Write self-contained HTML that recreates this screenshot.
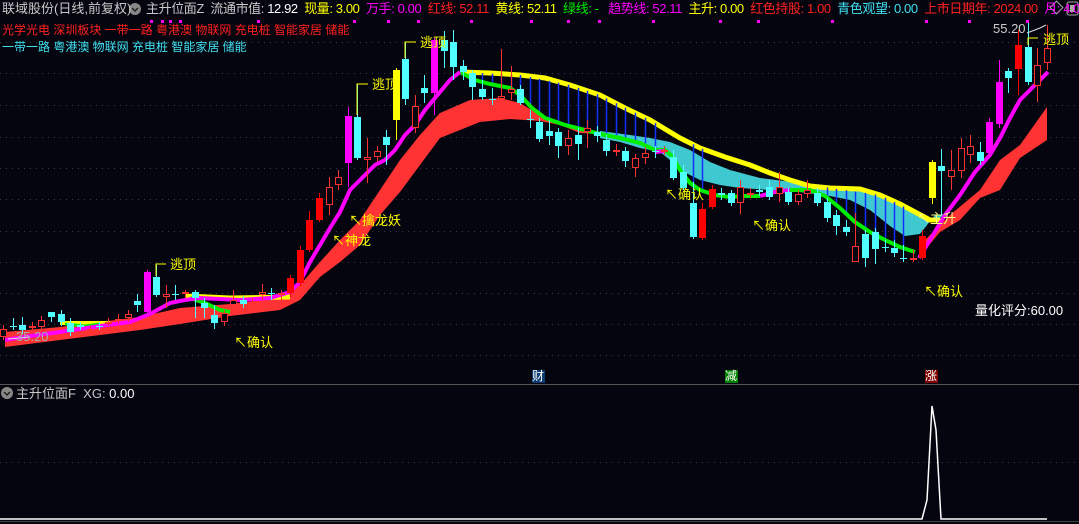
<!DOCTYPE html>
<html><head><meta charset="utf-8">
<style>
html,body{margin:0;padding:0;background:#05050f;}
body{width:1079px;height:524px;overflow:hidden;position:relative;font-family:"Liberation Sans","Noto Sans CJK SC",sans-serif;}
svg{position:absolute;left:0;top:0;}
.t{position:absolute;white-space:nowrap;font-size:12px;line-height:15px;}
.b{font-size:13px;}
</style></head><body>
<svg id="s" width="1079" height="524" xmlns="http://www.w3.org/2000/svg">
<g id="grid" stroke="#3a3a44" stroke-width="1" stroke-dasharray="1,5"></g>
<polygon fill="#ff3333" points="5,332 60,327 100,322 140,317 180,308 230,304 280,298 300,285 320,262 340,240 360,220 380,190 400,160 420,135 440,113 470,100 500,98 520,103 540,115 560,125 580,130 600,133 600,134 580,133 560,125 540,121 510,119 480,122 455,132 440,138 420,165 400,192 380,215 360,245 340,262 320,277 300,300 280,310 230,316 180,324 140,330 100,335 60,340 5,347"/>
<polygon fill="#ff3333" points="925,240 950,215 980,190 1000,160 1020,145 1047,107 1047,140 1020,158 1000,190 980,198 960,220 940,232 925,250"/>
<polygon fill="#40c8d0" points="600,131 630,135 650,138 670,142 690,150 710,162 730,170 760,178 800,183 840,187 880,195 910,210 935,222 945,214 935,215 920,234 905,236 890,226 870,210 850,200 830,196 800,192 770,190 740,188 720,185 700,180 680,170 670,160 660,152 640,148 620,142 600,138"/>
<polyline fill="none" stroke="#ffff00" stroke-width="5" points="460,72 490,73 520,75 545,78 570,85 600,95 625,108 650,120 680,138 700,148 725,157 750,165 770,173 790,180 810,186 830,188 860,189 880,195 900,204 915,212 930,220 940,220"/>
<polyline fill="none" stroke="#ffff00" stroke-width="5" points="185,296 230,298 290,297"/>
<polyline fill="none" stroke="#ffff00" stroke-width="4" points="60,323 110,323"/>
<g id="blue" stroke="#1030ff" stroke-width="1.5"></g>
<polyline fill="none" stroke="#00ee00" stroke-width="4" points="460,72 475,80 490,84 510,88 520,95 532,108 545,118 565,125 585,130 600,134 620,138 640,143 655,150 665,150 672,156 680,170 690,183 700,190 715,195 730,197 745,196 760,196"/>
<polyline fill="none" stroke="#00ee00" stroke-width="4" points="790,190 810,190 825,196 840,208 855,222 870,232 885,240 900,247 915,252"/>
<polyline fill="none" stroke="#00ee00" stroke-width="4" points="190,298 205,303 220,310 230,312"/>
<polyline fill="none" stroke="#00ee00" stroke-width="3" points="65,324 85,326 100,324"/>
<polyline fill="none" stroke="#ff00ff" stroke-width="4" points="655,152 665,151"/>
<polyline fill="none" stroke="#ff00ff" stroke-width="4" points="760,196 775,192 790,190"/>
<polyline fill="none" stroke="#ff00ff" stroke-width="4" points="5,340 30,336 60,332 100,326 130,322 150,314 170,303 185,300 200,298 240,300 270,298 290,292 300,282 310,262 320,245 330,228 340,212 350,190 360,180 375,165 385,160 395,150 405,135 415,125 425,110 440,92 450,80 460,72"/>
<polyline fill="none" stroke="#ff00ff" stroke-width="4" points="919,258 930,240 945,215 960,195 975,172 990,155 1000,138 1010,118 1020,100 1035,85 1048,72"/>
<g id="candles"></g>
<g stroke="#ffff00" stroke-width="1" fill="none">
<polyline points="405,58 405,42 416,42"/><polyline points="357,115 357,84 368,84"/>
<polyline points="156,276 156,264 166,264"/><polyline points="1028,45 1028,38 1038,38"/>
</g>
<polyline points="1027,33 1040,28 1046,25" stroke="#ddd" fill="none" stroke-width="1"/>
<polyline points="30,337 8,339" stroke="#ddd" fill="none" stroke-width="1"/>
<line x1="0" y1="384.5" x2="1079" y2="384.5" stroke="#555" stroke-width="1"/>
<line x1="0" y1="462.5" x2="1079" y2="462.5" stroke="#3a3a44" stroke-dasharray="1,5"/>
<line x1="0" y1="521.5" x2="1079" y2="521.5" stroke="#444"/>
<polyline points="0,519 922,519 927,500 932,406 936,430 941,519 1047,519" fill="none" stroke="#fff" stroke-width="1.5"/>
<rect x="532" y="370" width="13" height="13" fill="#0a3a70"/>
<rect x="725" y="370" width="13" height="13" fill="#008000"/>
<rect x="925" y="370" width="13" height="13" fill="#800000"/>
<circle cx="135" cy="9" r="6" fill="#888"/><polyline points="132,8 135,11 138,8" stroke="#222" fill="none" stroke-width="1.5"/>
<circle cx="7" cy="393" r="6" fill="#888"/><polyline points="4,392 7,395 10,392" stroke="#222" fill="none" stroke-width="1.5"/>
<rect x="1010" y="0" width="69" height="18" fill="#05050f"/>
<rect x="1052" y="3" width="9" height="9" transform="rotate(45 1056.5 7.5)" fill="none" stroke="#aaa"/>
<rect x="1067" y="2" width="11" height="13" rx="2" fill="none" stroke="#aaa"/>
<rect x="1070" y="5" width="5" height="7" fill="#aaa"/>
<g id="dots" fill="#ff00ff"></g>
</svg>
<div class="t b" style="left:2px;top:1px;color:#c8c8c8">联域股份(日线,前复权)</div>
<div class="t b" style="left:146px;top:1px;color:#c8c8c8;letter-spacing:-0.4px">主升位面Z&nbsp; 流通市值: <span style="color:#fff">12.92</span>&nbsp; <span style="color:#ffff00">现量: 3.00</span>&nbsp; <span style="color:#ff00ff">万手: 0.00</span>&nbsp; <span style="color:#ff2020">红线: 52.11</span>&nbsp; <span style="color:#ffff00">黄线: 52.11</span>&nbsp; <span style="color:#00ee00">绿线: -</span>&nbsp;&nbsp; <span style="color:#ff00ff">趋势线: 52.11</span>&nbsp; <span style="color:#ffff00">主升: 0.00</span>&nbsp; <span style="color:#ff2020">红色持股: 1.00</span>&nbsp; <span style="color:#40e0f0">青色观望: 0.00</span>&nbsp; <span style="color:#ff2020">上市日期年: 2024.00</span>&nbsp; <span style="color:#ff00ff">月: 4.0</span></div>
<div class="t" style="left:2px;top:23px;color:#ff2020">光学光电 深圳板块 一带一路 粤港澳 物联网 充电桩 智能家居 储能</div>
<div class="t" style="left:2px;top:40px;color:#40e0f0">一带一路 粤港澳 物联网 充电桩 智能家居 储能</div>
<div class="t b" style="left:420px;top:35px;color:#ffff00">逃顶</div>
<div class="t b" style="left:372px;top:77px;color:#ffff00">逃顶</div>
<div class="t b" style="left:170px;top:257px;color:#ffff00">逃顶</div>
<div class="t b" style="left:1043px;top:32px;color:#ffff00">逃顶</div>
<div class="t b" style="left:349px;top:213px;color:#ffff00">↖擒龙妖</div>
<div class="t b" style="left:332px;top:233px;color:#ffff00">↖神龙</div>
<div class="t b" style="left:234px;top:335px;color:#ffff00">↖确认</div>
<div class="t b" style="left:665px;top:187px;color:#ffff00">↖确认</div>
<div class="t b" style="left:752px;top:218px;color:#ffff00">↖确认</div>
<div class="t b" style="left:924px;top:284px;color:#ffff00">↖确认</div>
<div class="t b" style="left:917px;top:211px;color:#ffff80">↖主升</div>
<div class="t b" style="left:975px;top:303px;color:#fff">量化评分:60.00</div>
<div class="t b" style="left:993px;top:21px;color:#ccc">55.20</div>
<div class="t b" style="left:16px;top:329px;color:#aaa">35.20</div>
<div class="t" style="left:532px;top:369px;color:#fff">财</div>
<div class="t" style="left:725px;top:369px;color:#fff">减</div>
<div class="t" style="left:925px;top:369px;color:#fff">涨</div>
<div class="t b" style="left:16px;top:386px;color:#c8c8c8">主升位面F&nbsp; XG: <span style="color:#fff">0.00</span></div>
<script>
var NS="http://www.w3.org/2000/svg";
function el(p,t,a){var e=document.createElementNS(NS,t);for(var k in a)e.setAttribute(k,a[k]);document.getElementById(p).appendChild(e);}
[42,73,105,137,168,199,231,262,293,324,355].forEach(function(y){el('grid','line',{x1:0,x2:1079,y1:y+.5,y2:y+.5});});
[150,161,169,179,257,353,387,417,470,530,567,598,652,719,757,831,925,968,1026].forEach(function(x){el('dots','rect',{x:x,y:20,width:3,height:3});});
var C={r:'#ff3030',R:'#ff0000',c:'#50ffff',m:'#ff00ff',y:'#ffff00'};
var d=[[0,329,337,325,340,'r'],[10,326,327,318,330,'c'],[19,325,330,317,334,'c'],[29,326,328,322,331,'r'],[38,320,327,316,330,'r'],[48,312,317,312,322,'c'],[58,314,322,310,326,'c'],[67,323,332,318,336,'c'],[77,325,327,322,330,'c'],[87,329,330,326,333,'r'],[96,326,327,322,330,'c'],[105,322,323,318,326,'r'],[115,319,320,314,324,'r'],[125,314,318,310,322,'r'],[134,301,305,294,312,'c'],[144,272,312,270,314,'m'],[153,277,295,265,297,'c'],[163,294,297,285,308,'r'],[172,294,295,285,300,'c'],[182,292,294,290,298,'r'],[192,292,298,290,318,'c'],[201,303,308,298,318,'c'],[211,315,323,305,329,'c'],[221,313,322,310,326,'r'],[230,300,305,290,310,'r'],[240,300,304,296,308,'c'],[249,302,303,298,308,'r'],[259,292,295,284,300,'r'],[268,293,294,288,300,'c'],[278,293,294,290,300,'r'],[287,278,293,275,297,'R'],[297,250,283,246,286,'R'],[306,220,250,211,252,'R'],[316,198,220,193,222,'R'],[326,187,205,177,215,'r'],[335,177,185,170,190,'r'],[345,116,163,107,187,'m'],[354,117,158,84,160,'c'],[364,157,160,138,183,'r'],[374,151,157,146,162,'r'],[383,137,145,130,165,'c'],[393,70,120,68,140,'y'],[402,59,99,42,105,'c'],[412,106,128,95,133,'r'],[421,88,93,75,103,'c'],[431,40,93,38,115,'m'],[441,40,51,31,68,'c'],[450,42,67,30,80,'c'],[460,66,72,60,80,'c'],[469,73,87,70,100,'c'],[479,89,97,80,100,'c'],[489,99,100,88,105,'c'],[498,96,99,49,103,'r'],[508,89,93,66,100,'r'],[517,89,103,85,105,'c'],[527,119,120,110,128,'c'],[536,122,139,118,142,'c'],[546,131,136,120,145,'c'],[555,132,146,128,158,'c'],[565,138,146,130,155,'r'],[575,135,144,128,160,'c'],[584,128,132,120,148,'r'],[594,132,136,126,142,'c'],[603,140,151,135,156,'c'],[613,150,151,144,156,'r'],[622,151,161,147,167,'c'],[632,158,168,154,177,'r'],[642,153,158,147,164,'r'],[652,151,152,146,158,'c'],[661,150,151,146,155,'r'],[670,157,178,150,180,'c'],[680,172,188,165,190,'c'],[690,203,237,182,239,'c'],[699,209,238,203,240,'R'],[709,189,207,185,209,'R'],[718,193,195,188,200,'c'],[728,193,203,190,206,'c'],[737,187,203,180,214,'r'],[747,193,194,188,198,'r'],[756,190,192,185,196,'c'],[766,187,197,180,200,'c'],[776,187,194,172,202,'r'],[785,192,202,188,205,'c'],[795,194,202,190,205,'r'],[804,190,194,180,198,'r'],[814,193,203,188,206,'c'],[824,202,218,198,222,'c'],[833,215,226,210,235,'c'],[843,227,232,220,236,'c'],[852,246,262,213,262,'r'],[862,234,258,230,267,'c'],[872,232,249,228,264,'c'],[882,247,248,240,252,'c'],[891,248,253,240,257,'c'],[900,258,259,245,262,'c'],[910,258,260,250,262,'r'],[919,236,258,230,260,'R'],[929,162,198,160,204,'y'],[938,166,171,149,215,'c'],[948,170,177,150,190,'r'],[958,148,171,138,178,'r'],[967,146,155,135,163,'r'],[977,152,161,142,165,'c'],[986,122,153,118,155,'m'],[996,82,124,60,128,'m'],[1005,71,78,68,93,'c'],[1015,45,69,30,95,'R'],[1025,47,82,20,85,'c'],[1034,65,86,48,102,'r'],[1044,48,63,25,70,'r']];
function interp(pts,x){for(var i=0;i<pts.length-1;i++){if(x>=pts[i][0]&&x<=pts[i+1][0]){var t=(x-pts[i][0])/(pts[i+1][0]-pts[i][0]);return pts[i][1]+t*(pts[i+1][1]-pts[i][1]);}}return null;}
var Y=[[460,72],[520,75],[570,85],[600,95],[650,120],[700,148],[750,165],[790,180],[830,188],[880,195],[915,212]];
var G=[[480,82],[520,95],[545,118],[585,130],[640,143],[680,170],[700,190],[760,196],[810,190],[840,208],[870,232],[900,247],[915,252]];
d.forEach(function(c){var x=c[0]+3.5;if((x>480&&x<660)||(x>820&&x<912)||(x>690&&x<712)){var a=interp(Y,x),b=interp(G,x);if(a&&b)el('blue','line',{x1:x,x2:x,y1:a,y2:b});}});
d.forEach(function(c){var x=c[0],col=C[c[5]],cx=x+3.5;
el('candles','line',{x1:cx,x2:cx,y1:c[3],y2:c[4],stroke:col,'stroke-width':1});
var h=Math.max(1,c[2]-c[1]);
if(c[5]=='r')el('candles','rect',{x:x+.5,y:c[1]+.5,width:6,height:Math.max(1,h-1),fill:'#05050f',stroke:col,'stroke-width':1});
else el('candles','rect',{x:x,y:c[1],width:7,height:h,fill:col});});
</script>
</body></html>
